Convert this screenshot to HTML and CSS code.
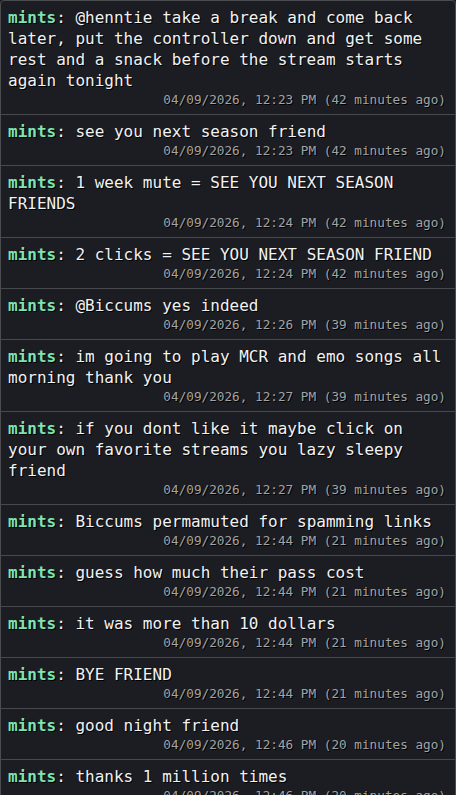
FILE: index.html
```html
<!DOCTYPE html>
<html>
<head>
  <meta charset="utf-8" />
  <title>chat log</title>
  <link rel="stylesheet" href="styles.css">
</head>
<body>

<div class='log'>

  <div class='msg'>
    <p class='msg-text'><span class='user'>mints</span>: @henntie take a break and come back later, put the controller down and get some rest and a snack before the stream starts again tonight</p>
    <p class='msg-time'>04/09/2026, 12:23 PM (42 minutes ago)</p>
  </div>

  <div class='msg'>
    <p class='msg-text'><span class='user'>mints</span>: see you next season friend</p>
    <p class='msg-time'>04/09/2026, 12:23 PM (42 minutes ago)</p>
  </div>

  <div class='msg'>
    <p class='msg-text'><span class='user'>mints</span>: 1 week mute = SEE YOU NEXT SEASON FRIENDS</p>
    <p class='msg-time'>04/09/2026, 12:24 PM (42 minutes ago)</p>
  </div>

  <div class='msg'>
    <p class='msg-text'><span class='user'>mints</span>: 2 clicks = SEE YOU NEXT SEASON FRIEND</p>
    <p class='msg-time'>04/09/2026, 12:24 PM (42 minutes ago)</p>
  </div>

  <div class='msg'>
    <p class='msg-text'><span class='user'>mints</span>: @Biccums yes indeed</p>
    <p class='msg-time'>04/09/2026, 12:26 PM (39 minutes ago)</p>
  </div>

  <div class='msg'>
    <p class='msg-text'><span class='user'>mints</span>: im going to play MCR and emo songs all morning thank you</p>
    <p class='msg-time'>04/09/2026, 12:27 PM (39 minutes ago)</p>
  </div>

  <div class='msg'>
    <p class='msg-text'><span class='user'>mints</span>: if you dont like it maybe click on your own favorite streams you lazy sleepy friend</p>
    <p class='msg-time'>04/09/2026, 12:27 PM (39 minutes ago)</p>
  </div>

  <div class='msg'>
    <p class='msg-text'><span class='user'>mints</span>: Biccums permamuted for spamming links</p>
    <p class='msg-time'>04/09/2026, 12:44 PM (21 minutes ago)</p>
  </div>

  <div class='msg'>
    <p class='msg-text'><span class='user'>mints</span>: guess how much their pass cost</p>
    <p class='msg-time'>04/09/2026, 12:44 PM (21 minutes ago)</p>
  </div>

  <div class='msg'>
    <p class='msg-text'><span class='user'>mints</span>: it was more than 10 dollars</p>
    <p class='msg-time'>04/09/2026, 12:44 PM (21 minutes ago)</p>
  </div>

  <div class='msg'>
    <p class='msg-text'><span class='user'>mints</span>: BYE FRIEND</p>
    <p class='msg-time'>04/09/2026, 12:44 PM (21 minutes ago)</p>
  </div>

  <div class='msg'>
    <p class='msg-text'><span class='user'>mints</span>: good night friend</p>
    <p class='msg-time'>04/09/2026, 12:46 PM (20 minutes ago)</p>
  </div>

  <div class='msg'>
    <p class='msg-text'><span class='user'>mints</span>: thanks 1 million times</p>
    <p class='msg-time'>04/09/2026, 12:46 PM (20 minutes ago)</p>
  </div>

</div>

</body>
</html>
```

FILE: styles.css
```css
*{margin:0;padding:0;box-sizing:border-box;}
html,body{
  background:#1b1d22;
}
body{
  height:795px;
  overflow:hidden;
  font-family:"DejaVu Sans Mono","Liberation Mono",monospace;
  color:#f2f2f2;
}
.log{
  width:456px;
  border:1px solid #4a4c50;
  border-radius:4px;
  background:#1b1d22;
}
.msg{
  padding:6px 9px 6px 7px;
  border-top:1px solid #47494d;
}
.msg:first-child{
  border-top:none;
}
.msg-text{
  font-size:16px;
  line-height:21px;
  text-shadow:1px 1px 0 #000;
  word-wrap:break-word;
}
.user{
  color:#7fe3b4;
  font-weight:bold;
}
.msg-time{
  text-align:right;
  font-size:12.7px;
  line-height:17px;
  color:#a3a3a3;
  text-shadow:1px 1px 0 #000;
}
```
